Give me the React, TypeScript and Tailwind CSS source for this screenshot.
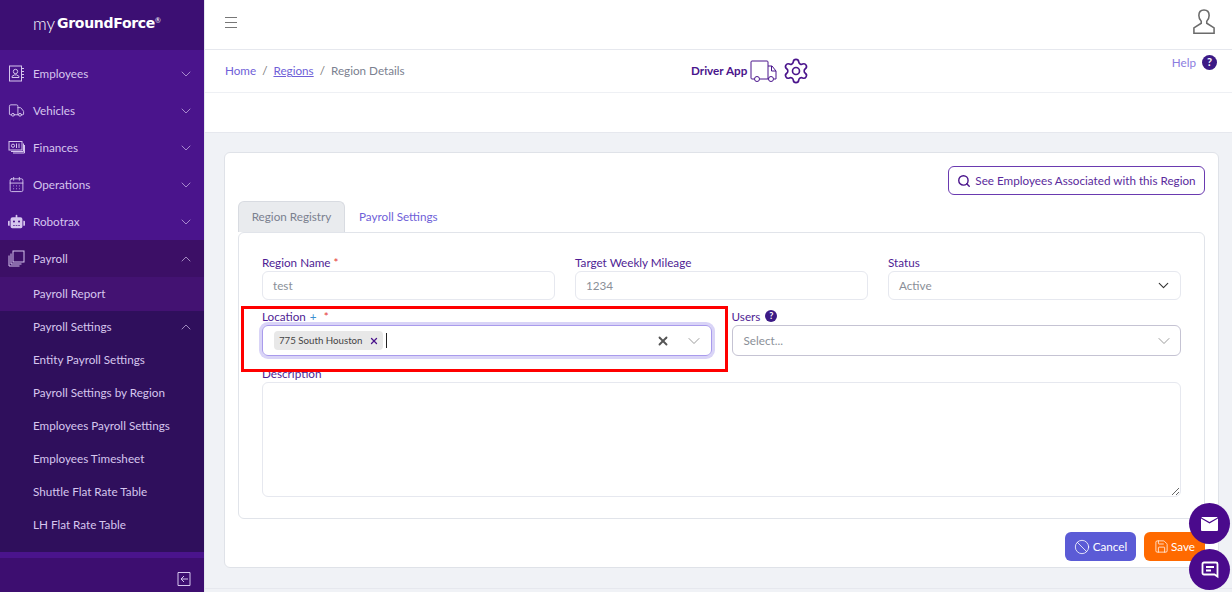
import { ChevronDown, ChevronUp, Search, Ban, Save, X, Truck, Settings, CalendarDays } from "lucide-react";
import { FaRobot } from "react-icons/fa";

const FONT = "font-['Lato','Open_Sans',sans-serif]";

const mainNav = [
  { label: "Employees", icon: <ContactIcon /> },
  { label: "Vehicles", icon: <Truck className="w-[17px] h-[17px]" strokeWidth={1.3} /> },
  { label: "Finances", icon: <CashIcon /> },
  { label: "Operations", icon: <CalendarDays className="w-[17px] h-[17px]" strokeWidth={1.3} /> },
  { label: "Robotrax", icon: <FaRobot className="w-[17px] h-[17px]" /> },
];

const settingsNav = [
  "Entity Payroll Settings",
  "Payroll Settings by Region",
  "Employees Payroll Settings",
  "Employees Timesheet",
  "Shuttle Flat Rate Table",
  "LH Flat Rate Table",
  "Other",
];

function ContactIcon() {
  return (
    <svg width="17" height="17" viewBox="0 0 17 17" fill="none" stroke="currentColor" strokeWidth="1">
      <rect x="1.5" y="1" width="12" height="15" />
      <circle cx="7.5" cy="6.5" r="2.2" />
      <path d="M4 12.5v-1.2l2.4-1.4h2.2l2.4 1.4v1.2zM13 3.5h3M13 6.5h3M13 9.5h3M13 12.5h3" />
    </svg>
  );
}

function CashIcon() {
  return (
    <svg width="17" height="17" viewBox="0 0 17 17" fill="none" stroke="currentColor" strokeWidth="1">
      <rect x="1" y="2.5" width="13" height="8.5" />
      <circle cx="5" cy="6.7" r="1.6" />
      <path d="M8.5 4.5v4.5M11 4.5v4.5M15.5 4.5V12.5H3M16.5 6v8H5" />
    </svg>
  );
}

function StackIcon() {
  return (
    <svg width="17" height="17" viewBox="0 0 17 17" fill="none" stroke="currentColor" strokeWidth="1">
      <rect x="5" y="1" width="11" height="11" />
      <path d="M3 3.5V14H13.5M1 5.5V16H11.5" />
    </svg>
  );
}

function UserIcon() {
  return (
    <svg width="22" height="27" viewBox="0 0 24 28" fill="none" stroke="#6b6b6b" strokeWidth="1.7" className="mb-[7px]">
      <path d="M12 1.5c-3.6 0-5.6 2.6-5.6 6 0 2.6 1 4.8 2.6 6.2v2.2L1 21v5.8h22V21l-8-5.1v-2.2c1.6-1.4 2.6-3.6 2.6-6.2 0-3.4-2-6-5.6-6z" />
    </svg>
  );
}

function DriverTruck() {
  return (
    <svg width="27" height="22" viewBox="0 0 27 22" fill="none" stroke="currentColor" strokeWidth="1">
      <path d="M4 19H2q-1 0-1-1V2q0-1 1-1h15q1 0 1 1v17M10 19h8.500" />
      <path d="M18 6h4l4 5v8h-2M21.500 6v5H26" />
      <circle cx="7" cy="19" r="2.500" />
      <circle cx="21" cy="19" r="2.500" />
    </svg>
  );
}

function Label({ children }: { children: React.ReactNode }) {
  return <div className="text-[11.7px] leading-[16px] text-[#4f1d94] -mt-px mb-px">{children}</div>;
}

function TextField({ label, value }: { label: React.ReactNode; value: string }) {
  return (
    <div>
      <Label>{label}</Label>
      <div className="h-[29px] border border-[#e6e8ef] rounded-md px-[10px] flex items-center text-[11.7px] text-[#8a8f98]">
        {value}
      </div>
    </div>
  );
}

export default function App() {
  return (
    <div className={`${FONT} flex h-[592px] w-[1232px] overflow-hidden relative bg-[#f0f2f6]`}>
      <aside className="w-[204px] shrink-0 flex flex-col bg-[#4a148c] text-[#d6c6ee] text-[11.7px]">
        <div className="h-[50px] shrink-0 bg-[#3c0f73] flex items-center pl-[33px] pb-[3px] text-white">
          <span className="text-[17px] font-light mr-[2px]">my</span>
          <span className="text-[14px] font-black font-['DejaVu_Sans',sans-serif] tracking-[-0.3px]">GroundForce</span>
          <sup className="text-[7px]">®</sup>
        </div>

        <nav className="flex-1 overflow-hidden flex flex-col">
          <div className="shrink-0 pt-[5px]">
            {mainNav.map((item) => (
              <div key={item.label} className="h-[37px] flex items-center pl-[8px] pr-[10px]">
                <span className="w-[25px] flex justify-start">{item.icon}</span>
                <span className="flex-1">{item.label}</span>
                <ChevronDown className="w-[16px] h-[16px]" strokeWidth={1} />
              </div>
            ))}
          </div>
          <div className="shrink-0 h-[37px] bg-[#3c0f66] flex items-center pl-[8px] pr-[10px]">
            <span className="w-[25px]"><StackIcon /></span>
            <span className="flex-1">Payroll</span>
            <ChevronUp className="w-[16px] h-[16px]" strokeWidth={1} />
          </div>
          <div className="shrink-0 h-[34px] bg-[#431272] flex items-center pl-[33px]">Payroll Report</div>
          <div className="flex-1 overflow-hidden bg-[#2f0f5c]">
            <div className="h-[32px] flex items-center pl-[33px] pr-[10px]">
              <span className="flex-1">Payroll Settings</span>
              <ChevronUp className="w-[16px] h-[16px]" strokeWidth={1} />
            </div>
            {settingsNav.map((s) => (
              <div key={s} className="h-[33px] flex items-center pl-[33px]">{s}</div>
            ))}
          </div>
        </nav>

        <div className="h-[6px] shrink-0 bg-[#4a148c]" />
        <div className="h-[34px] shrink-0 bg-[#3d0e70] flex items-center justify-end pr-[13px] pt-[7px]">
          <svg width="14" height="14" viewBox="0 0 14 14" fill="none" stroke="currentColor" strokeWidth="1">
            <path d="M1 .5h12v13H1zM11 7H4M7 4 4 7l3 3" />
          </svg>
        </div>
      </aside>

      <main className="flex-1 min-w-0 flex flex-col border-l border-[#e4e7ee]">
        <header className="h-[50px] shrink-0 bg-white border-b border-[#e6e8ee] flex items-center justify-between pl-[20px] pr-[17px]">
          <div className="flex flex-col gap-[4px] w-[12px] mb-[4px]">
            <span className="h-px bg-[#777]" />
            <span className="h-px bg-[#777]" />
            <span className="h-px bg-[#777]" />
          </div>
          <UserIcon />
        </header>

        <div className="h-[43px] shrink-0 bg-white border-b border-[#eef0f4] grid grid-cols-[466px_auto_1fr] items-center pl-[20px] pr-[15px] text-[11.7px]">
          <div className="flex gap-[6px]">
            <span className="text-[#6f5fd8]">Home</span>
            <span className="text-[#777]">/</span>
            <span className="text-[#6f5fd8] underline">Regions</span>
            <span className="text-[#777]">/</span>
            <span className="text-[#7b8190]">Region Details</span>
          </div>
          <div className="flex items-center gap-[3px] text-[#4a148c]">
            <span className="font-bold pb-[1px]">Driver App</span>
            <DriverTruck />
            <Settings className="w-[28px] h-[28px] ml-[2px]" strokeWidth={1.4} />
          </div>
          <div className="flex justify-end items-start gap-[6px] self-start pt-[4px]">
            <span className="text-[#8b7de0]">Help</span>
            <span className="w-[15px] h-[15px] mt-px rounded-full bg-[#3c1a86] text-white text-[11px] font-bold flex items-center justify-center">?</span>
          </div>
        </div>

        <div className="h-[40px] shrink-0 bg-white border-b border-[#e6e8ee]" />

        <div className="flex-1 px-[19px] pt-[19px]">
          <section className="h-[416px] w-[995px] bg-white border border-[#dfe2e8] rounded-md px-[13px] pt-[13px]">
            <div className="flex justify-end">
              <button className="h-[29px] w-[257px] border border-[#6a3ab0] rounded-md flex items-center justify-center gap-[4px] text-[11.7px] text-[#5a2a9c]">
                <Search className="w-[14px] h-[14px] text-[#4a148c]" strokeWidth={2.4} />
                <span className="pt-[1px]">See Employees Associated with this Region</span>
              </button>
            </div>

            <div className="flex mt-[6px] text-[11.7px]">
              <div className="h-[31px] w-[107px] bg-[#e9ebee] border border-b-0 border-[#d8dbe1] rounded-t-md flex items-center justify-center text-[#7b8190]">
                Region Registry
              </div>
              <div className="h-[31px] px-[14px] flex items-center text-[#6f5fd8]">Payroll Settings</div>
            </div>

            <div className="h-[287px] border border-[#e1e4ea] rounded-md px-[23px] pt-[22px]">
              <div className="grid grid-cols-3 gap-x-[20px]">
                <TextField label={<>Region Name <span className="text-[#e53935]">*</span></>} value="test" />
                <TextField label="Target Weekly Mileage" value="1234" />
                <div>
                  <Label>Status</Label>
                  <div className="h-[29px] border border-[#e6e8ef] rounded-md px-[10px] flex items-center justify-between text-[11.7px] text-[#8a8f98]">
                    Active
                    <ChevronDown className="w-[17px] h-[17px] text-[#333] -mr-[2px]" strokeWidth={1.6} />
                  </div>
                </div>
              </div>

              <div className="grid grid-cols-2 gap-x-[20px] mt-[9px]">
                <div>
                  <Label>
                    Location <span className="text-[#3b8fd0] ml-[1px]">+</span>
                    <span className="text-[#e53935] ml-[7px]">*</span>
                  </Label>
                  <div className="h-[31px] border border-[#a99bec] rounded-md ring-[3px] ring-[#d9d4f7] flex items-center pl-[11px] pr-[7px]">
                    <span className="h-[19px] w-[109px] bg-[#e8e8e8] rounded-sm flex items-center pl-[5px] text-[9.7px] text-[#444]">
                      775 South Houston
                      <X className="w-[10px] h-[10px] ml-[6px] text-[#4a148c]" strokeWidth={3} />
                    </span>
                    <span className="w-px h-[15px] bg-[#222] ml-[3px]" />
                    <span className="flex-1" />
                    <X className="w-[14px] h-[14px] text-[#555] mr-[14px]" strokeWidth={3.2} />
                    <ChevronDown className="w-[20px] h-[20px] text-[#888]" strokeWidth={1} />
                  </div>
                </div>
                <div>
                  <div className="flex items-center gap-[5px] text-[11.7px] leading-[16px] text-[#4f1d94] -mt-px mb-px">
                    Users
                    <span className="w-[12px] h-[12px] rounded-full bg-[#3c1a86] text-white text-[9px] font-bold flex items-center justify-center">?</span>
                  </div>
                  <div className="h-[31px] border border-[#c5c3d3] rounded-md flex items-center justify-between pl-[11px] pr-[6px] text-[11.7px] text-[#8a8f98]">
                    Select...
                    <ChevronDown className="w-[20px] h-[20px] text-[#888]" strokeWidth={1} />
                  </div>
                </div>
              </div>

              <div className="mt-[10px]">
                <Label>Description</Label>
                <textarea readOnly className="block w-full h-[115px] border border-[#e6e8ef] rounded-md" />
              </div>
            </div>

            <div className="flex justify-end gap-[8px] mt-[13px] text-[11.7px] text-white">
              <button className="h-[29px] w-[71px] bg-[#5b5bd6] rounded-md flex items-center justify-center gap-[3px]">
                <Ban className="w-[16px] h-[16px]" strokeWidth={1.2} />
                Cancel
              </button>
              <button className="h-[29px] w-[61px] bg-[#ff6a00] rounded-md flex items-center justify-start pl-[10px] gap-[2px]">
                <Save className="w-[15px] h-[15px]" strokeWidth={1.2} />
                Save
              </button>
            </div>
          </section>
        </div>
        <div className="h-[4px] shrink-0 border-t border-[#e6e8ee]" />
      </main>

      {/* annotation drawn on top of the screenshot */}
      <div className="absolute left-[241px] top-[306px] w-[487px] h-[66px] border-[3px] border-[#ff0000] pointer-events-none" />

      <button className="absolute left-[1189px] top-[503px] w-[41px] h-[41px] rounded-full bg-[#4a0a8c] flex items-center justify-center">
        <svg width="17" height="14" viewBox="0 0 17 14" fill="#fff">
          <path d="M0 1.5 8.5 6.5 17 1.5V13a1 1 0 0 1-1 1H1a1 1 0 0 1-1-1V1.5zM1 0h15l.6.4L8.5 5 .4.4 1 0z" />
        </svg>
      </button>
      <button className="absolute left-[1189px] top-[549px] w-[41px] h-[41px] rounded-full bg-[#4a0a8c] flex items-center justify-center">
        <svg width="18" height="18" viewBox="0 0 18 18" fill="none" stroke="#fff" strokeWidth="1.8">
          <path d="M3 1.5h12a1.5 1.5 0 0 1 1.5 1.5v12.5l-3-2H3A1.5 1.5 0 0 1 1.5 12V3A1.5 1.5 0 0 1 3 1.5z" />
          <path d="M5 6h8M5 9.5h5" />
        </svg>
      </button>
    </div>
  );
}
